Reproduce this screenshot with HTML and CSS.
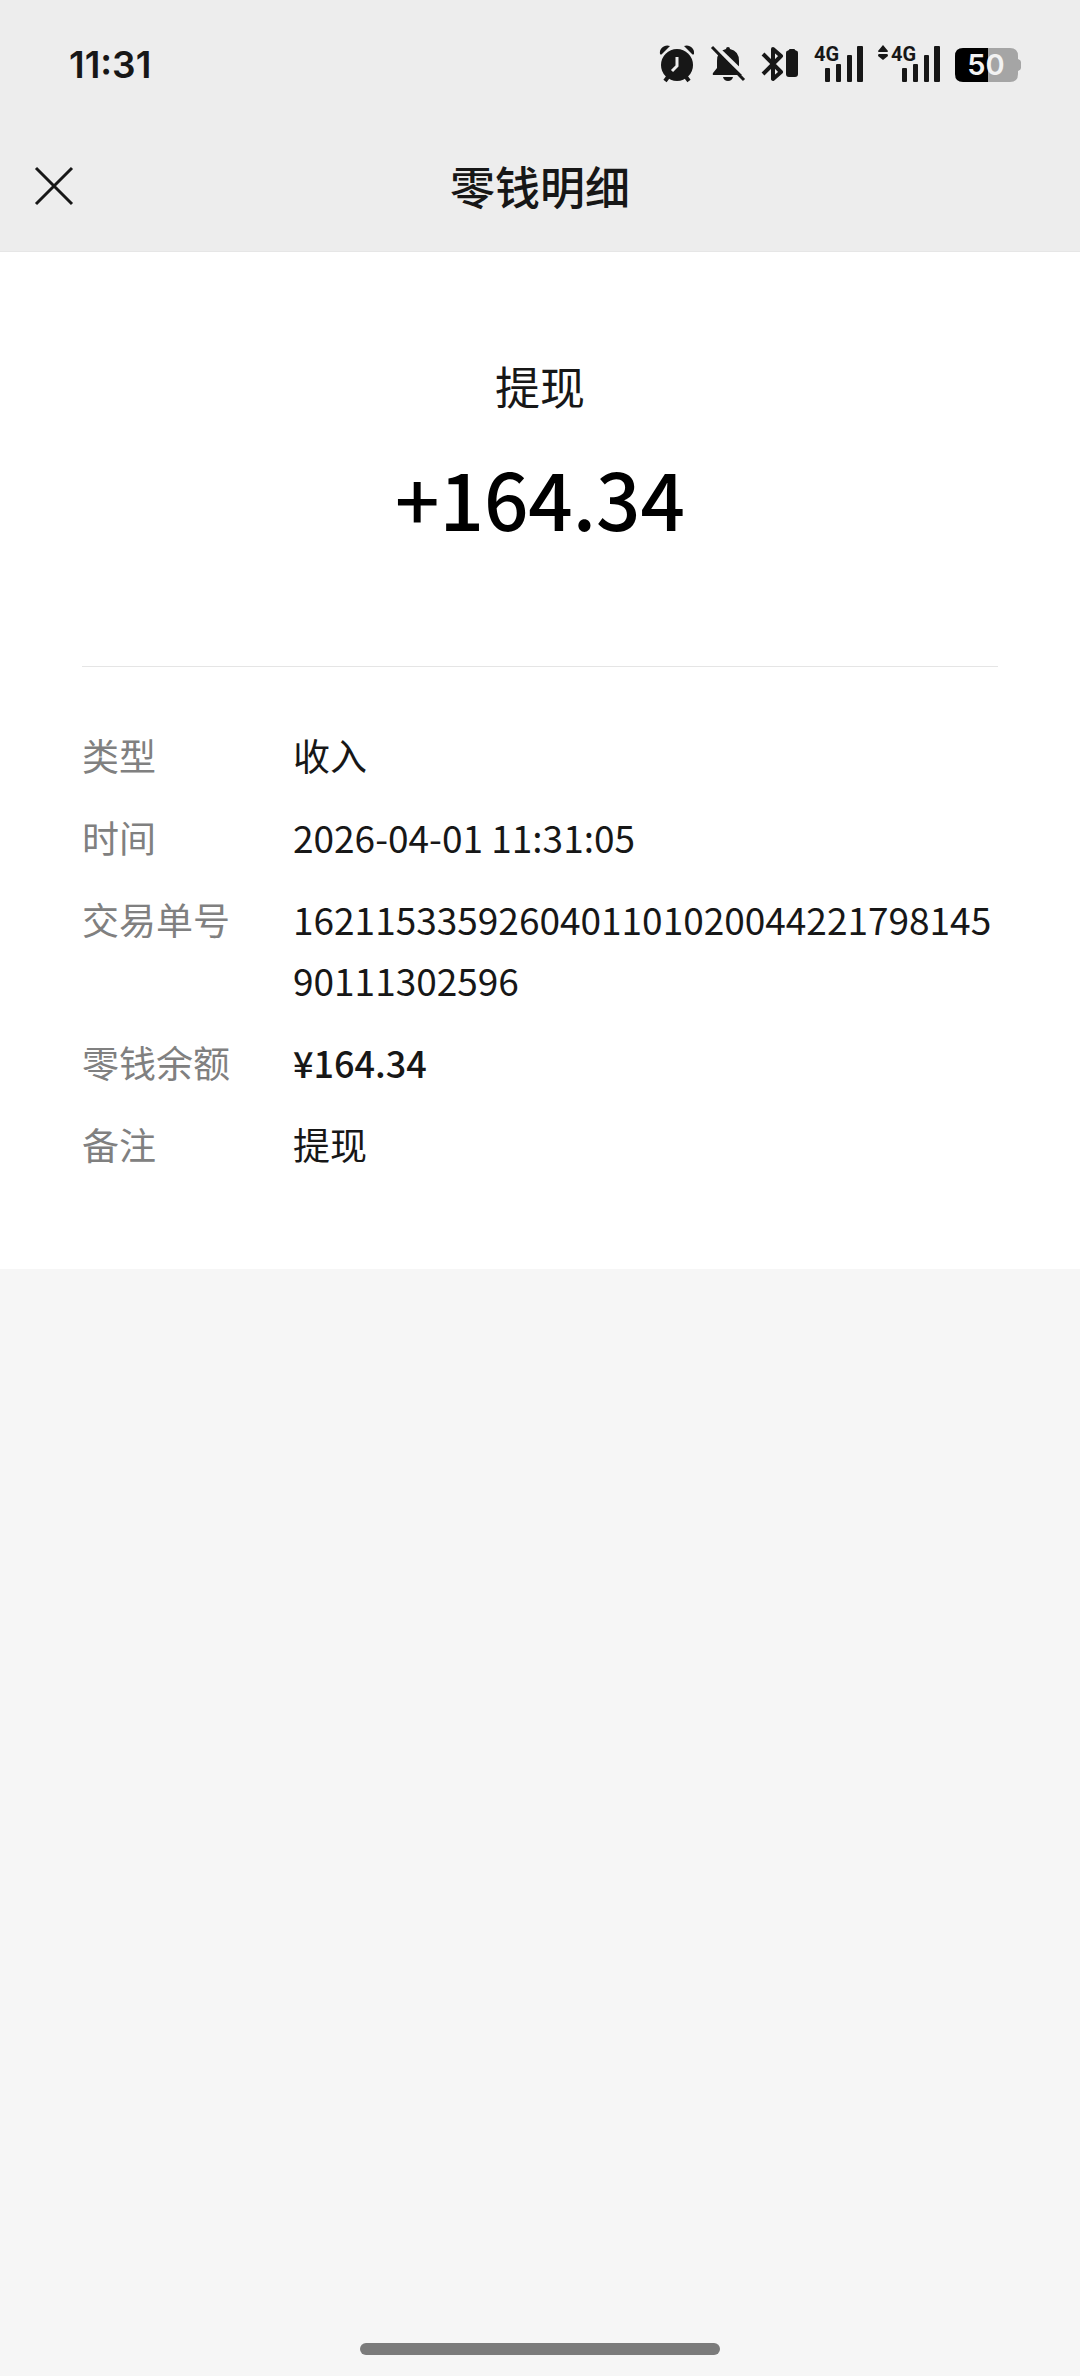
FILE: index.html
```html
<!DOCTYPE html>
<html lang="zh-CN">

<head>
    <meta charset="UTF-8">
    <title>零钱明细</title>
    <meta name="viewport" content="width=device-width, initial-scale=1.0">
    <link rel="stylesheet" href="styles.css">
</head>

<body>
    <header class="header">
        <div class="status-bar">
            <span class="clock">11:31</span>
            <div class="status-icons">
                <!-- alarm -->
                <svg width="36" height="40" viewBox="0 0 36 40">
                    <circle cx="18" cy="21" r="16" />
                    <path d="M1 10C0 4 6 0 11 2L3 10Q2 11 1 10ZM35 10C36 4 30 0 25 2L33 10Q34 11 35 10Z" />
                    <path class="line" d="M9 33L6 37M27 33L30 37" stroke-width="4" />
                    <path class="cut" d="M18 13V22L13 27" stroke-width="3" />
                </svg>
                <!-- muted bell -->
                <svg width="36" height="40" viewBox="0 0 36 40">
                    <path d="M16 5Q16 3 18 3Q20 3 20 5Q29 7 29 17V24L34 30V31H4Q2 31 3 29L7 24V17Q7 7 16 5Z" />
                    <path d="M13 33H23Q22 37 18 37Q14 37 13 33Z" />
                    <path class="cut" d="M4 1L37 33" stroke-width="4" />
                    <path class="line" d="M2 3L34 36" stroke-width="3" />
                </svg>
                <!-- bluetooth with device battery -->
                <svg width="38" height="40" viewBox="0 0 38 40">
                    <path class="line" d="M2 10L20 28L12 35V5L20 12L2 30" stroke-width="4" />
                    <path d="M28 6Q28 5 29 5H33Q34 5 34 6L36 7Q37 7 37 9V30Q37 33 34 33H28Q25 33 25 30V9Q25 7 26 7Z" />
                </svg>
                <!-- sim 1 -->
                <svg width="49" height="40" viewBox="0 0 49 40">
                    <text class="net" x="0" y="17">4G</text>
                    <rect x="11" y="24" width="5" height="14" rx="1" />
                    <rect x="22" y="20" width="5" height="18" rx="1" />
                    <rect x="33" y="11" width="5" height="27" rx="1" />
                    <rect x="43" y="2" width="6" height="36" rx="1" />
                </svg>
                <!-- sim 2 -->
                <svg width="62" height="40" viewBox="0 0 62 40">
                    <path d="M5 1L10 7Q10 8 9 8H1Q0 8 0 7ZM5 16L10 12Q10 10 9 10H1Q0 10 0 12Z" />
                    <text class="net" x="13" y="17">4G</text>
                    <rect x="24" y="24" width="5" height="14" rx="1" />
                    <rect x="35" y="20" width="5" height="18" rx="1" />
                    <rect x="46" y="11" width="5" height="27" rx="1" />
                    <rect x="56" y="2" width="6" height="36" rx="1" />
                </svg>
                <!-- battery -->
                <svg width="66" height="40" viewBox="0 0 66 40">
                    <path fill="#a5a5a5" d="M33 4H55Q63 4 63 12V15Q66 16 66 18V24Q66 26 63 27V30Q63 38 55 38H33Z" />
                    <path fill="#000" d="M8 4H33V38H8Q0 38 0 30V12Q0 4 8 4Z" />
                    <text class="level" x="31" y="31">50</text>
                </svg>
            </div>
        </div>
        <div class="nav-bar">
            <button class="close-btn" type="button" aria-label="关闭">
                <svg width="38" height="38" viewBox="0 0 38 38">
                    <path class="line" d="M1 1L37 37M37 1L1 37" stroke-width="3" />
                </svg>
            </button>
            <h1 class="title">零钱明细</h1>
        </div>
    </header>

    <main class="card">
        <div class="summary">
            <p class="kind">提现</p>
            <p class="amount">+164.34</p>
        </div>
        <dl class="details">
            <dt>类型</dt>
            <dd>收入</dd>
            <dt>时间</dt>
            <dd>2026-04-01 11:31:05</dd>
            <dt>交易单号</dt>
            <dd>162115335926040110102004422179814590111302596</dd>
            <dt>零钱余额</dt>
            <dd class="balance">¥164.34</dd>
            <dt>备注</dt>
            <dd>提现</dd>
        </dl>
    </main>

    <footer class="home">
        <div class="home-bar"></div>
    </footer>
</body>

</html>
```
FILE: styles.css
```css
* {
    box-sizing: border-box;
}

body {
    display: flex;
    flex-direction: column;
    min-height: 100vh;
    margin: 0;
    background-color: #f6f6f6;
    color: #171717;
    font-family: "Noto Sans CJK SC", sans-serif;
}

h1,
p,
dl,
dd {
    margin: 0;
}

svg {
    display: block;
    overflow: visible;
    fill: #171717;
}

.line {
    fill: none;
    stroke: #171717;
    stroke-linejoin: round;
}

.cut {
    fill: none;
    stroke: #ededed;
}

.header {
    background-color: #ededed;
    border-bottom: 1px solid #e6e6e6;
}

.status-bar {
    display: flex;
    justify-content: space-between;
    align-items: center;
    height: 120px;
    padding: 8px 59px 0 69px;
}

.clock {
    font-family: Inter, sans-serif;
    font-size: 37px;
    font-weight: 600;
}

.status-icons {
    display: flex;
    gap: 15px;
}

.net {
    font-family: Roboto, sans-serif;
    font-size: 20px;
    font-weight: bold;
}

.level {
    fill: #f2f2f2;
    font-family: Inter, sans-serif;
    font-size: 29px;
    font-weight: 600;
    text-anchor: middle;
}

.nav-bar {
    display: grid;
    grid-template-columns: 38px 1fr 38px;
    align-items: center;
    height: 131px;
    padding: 0 35px;
}

.close-btn {
    padding: 0;
    border: none;
    background: none;
    cursor: pointer;
}

.title {
    font-size: 45px;
    font-weight: 500;
    line-height: 64px;
    text-align: center;
}

.card {
    padding: 0 82px 94px;
    background-color: #fff;
}

.summary {
    padding: 102px 0 119px;
    border-bottom: 1px solid #e5e5e5;
    text-align: center;
}

.kind {
    font-size: 45px;
    line-height: 64px;
}

.amount {
    margin-top: 29px;
    color: #000;
    font-size: 78px;
    font-weight: 500;
    line-height: 100px;
}

.details {
    display: grid;
    grid-template-columns: 171px 1fr;
    gap: 21px 40px;
    padding-top: 58px;
    font-size: 37px;
    line-height: 61px;
}

.details dt {
    color: #808080;
}

.details dd {
    min-width: 0;
    overflow-wrap: anywhere;
}

.details .balance {
    font-size: 36px;
    font-weight: 500;
}

.home {
    display: flex;
    justify-content: center;
    margin-top: auto;
    padding-bottom: 21px;
}

.home-bar {
    width: 33.333%;
    height: 12px;
    border-radius: 6px;
    background-color: #7b7b7b;
}
```
